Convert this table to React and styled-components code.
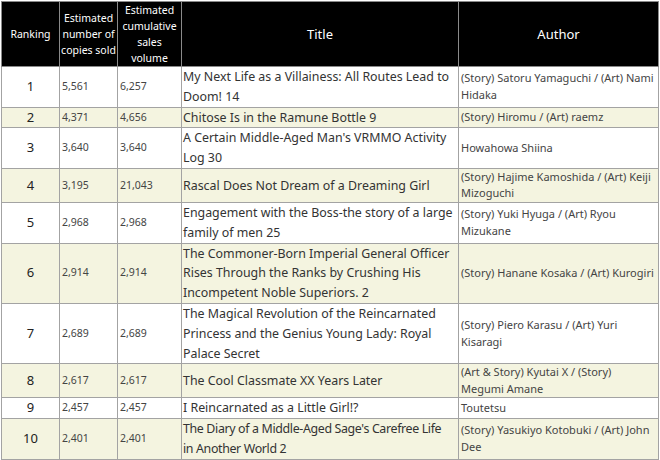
import React from "react";
import styled, { createGlobalStyle } from "styled-components";

const GlobalStyle = createGlobalStyle`
  body {
    margin: 0;
    background: #ffffff;
    font-family: "Noto Sans", "Noto Sans CJK JP", sans-serif;
  }
`;

const Page = styled.div`
  padding: 1px 1px 0 1px;
`;

const Table = styled.table`
  width: 657px;
  border-collapse: collapse;
  table-layout: fixed;
  border: 1px solid #a3a3a3;
`;

const HeadCell = styled.th`
  background: #000;
  color: #fff;
  font-weight: normal;
  font-size: ${(p) => (p.$big ? "13px" : "10.5px")};
  line-height: 16px;
  text-align: center;
  vertical-align: middle;
  border: 1px solid #8a8a8a;
  height: 63px;
  padding: 0;
  white-space: nowrap;
`;

const Row = styled.tr`
  background: ${(p) => (p.$alt ? "#f4f4e0" : "#ffffff")};
`;

const Cell = styled.td`
  border: 1px solid #a3a3a3;
  vertical-align: middle;
  padding: 0 2px;
  color: #333;
`;

const RankCell = styled(Cell)`
  text-align: center;
  font-size: 13px;
  line-height: 19.8px;
  color: #222;
`;

const NumCell = styled(Cell)`
  font-size: 10.5px;
  line-height: 19.8px;
  color: #444;
  padding-left: 2px;
`;

const TitleCell = styled(Cell)`
  font-size: 12.4px;
  line-height: 19.8px;
  color: #333;
  padding: 0 1px;
  letter-spacing: ${(p) => (p.$tight ? "-0.35px" : "normal")};
`;

const AuthorCell = styled(Cell)`
  font-size: 11px;
  line-height: 16.5px;
  color: #444;
  padding: 0 2px;
`;

const rows = [
  ["1", "5,561", "6,257", "My Next Life as a Villainess: All Routes Lead to Doom! 14", "(Story) Satoru Yamaguchi / (Art) Nami Hidaka"],
  ["2", "4,371", "4,656", "Chitose Is in the Ramune Bottle 9", "(Story) Hiromu / (Art) raemz"],
  ["3", "3,640", "3,640", "A Certain Middle-Aged Man's VRMMO Activity Log 30", "Howahowa Shiina"],
  ["4", "3,195", "21,043", "Rascal Does Not Dream of a Dreaming Girl", "(Story) Hajime Kamoshida / (Art) Keiji Mizoguchi"],
  ["5", "2,968", "2,968", "Engagement with the Boss-the story of a large family of men 25", "(Story) Yuki Hyuga / (Art) Ryou Mizukane"],
  ["6", "2,914", "2,914", "The Commoner-Born Imperial General Officer Rises Through the Ranks by Crushing His Incompetent Noble Superiors. 2", "(Story) Hanane Kosaka / (Art) Kurogiri"],
  ["7", "2,689", "2,689", "The Magical Revolution of the Reincarnated Princess and the Genius Young Lady: Royal Palace Secret", "(Story) Piero Karasu / (Art) Yuri Kisaragi"],
  ["8", "2,617", "2,617", "The Cool Classmate XX Years Later", "(Art & Story) Kyutai X / (Story) Megumi Amane"],
  ["9", "2,457", "2,457", "I Reincarnated as a Little Girl!?", "Toutetsu"],
  ["10", "2,401", "2,401", "The Diary of a Middle-Aged Sage's Carefree Life in\u00a0Another World 2", "(Story) Yasukiyo Kotobuki / (Art) John Dee", true],
];

export default function App() {
  return (
    <Page>
      <GlobalStyle />
      <Table>
        <colgroup>
          <col style={{ width: 58 }} />
          <col style={{ width: 58 }} />
          <col style={{ width: 64 }} />
          <col style={{ width: 277 }} />
          <col style={{ width: 200 }} />
        </colgroup>
        <thead>
          <tr>
            <HeadCell>Ranking</HeadCell>
            <HeadCell>
              Estimated
              <br />
              number of
              <br />
              copies sold
            </HeadCell>
            <HeadCell>
              Estimated
              <br />
              cumulative
              <br />
              sales
              <br />
              volume
            </HeadCell>
            <HeadCell $big>Title</HeadCell>
            <HeadCell $big>Author</HeadCell>
          </tr>
        </thead>
        <tbody>
          {rows.map(([rank, sold, total, title, author, tight], i) => (
            <Row key={rank} $alt={i % 2 === 1}>
              <RankCell>{rank}</RankCell>
              <NumCell>{sold}</NumCell>
              <NumCell>{total}</NumCell>
              <TitleCell $tight={tight}>{title}</TitleCell>
              <AuthorCell>{author}</AuthorCell>
            </Row>
          ))}
        </tbody>
      </Table>
    </Page>
  );
}
